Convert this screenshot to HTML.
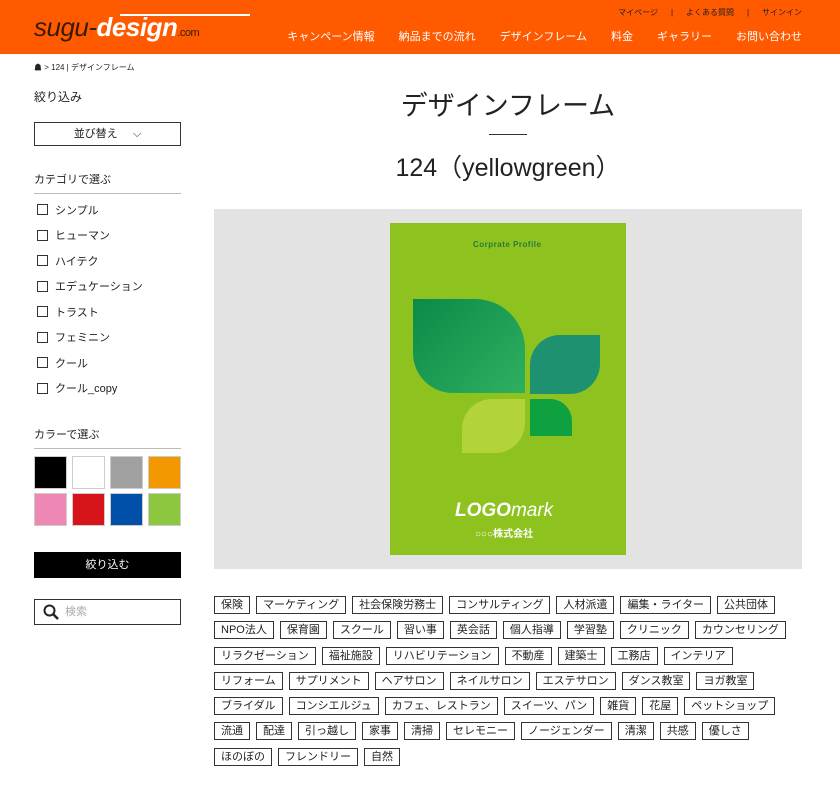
<!DOCTYPE html>
<html><head><meta charset="utf-8"><style>
*{box-sizing:border-box;margin:0;padding:0}
body{width:840px;height:787px;background:#fff;font-family:"Liberation Sans","Noto Sans CJK JP",sans-serif;color:#222;position:relative;overflow:hidden}
.hd{position:absolute;left:0;top:0;width:840px;height:54px;background:#ff5a00}
.logo{position:absolute;left:34px;top:12px;font-size:26px;color:#3a1a00;font-style:italic;letter-spacing:-0.5px}
.logo b{color:#fff}
.logo small{font-size:11px;color:#3a1a00;font-style:normal}
.logo .ln{position:absolute;left:86px;top:2px;width:130px;height:2px;background:#fff}
.top{position:absolute;right:38px;top:7px;font-size:8px;color:#222}
.top i{display:inline-block;width:28px;text-align:center;font-style:normal}
.nav{position:absolute;right:38px;top:28px;font-size:11px;color:#fff;display:flex;gap:24px}
.bc{position:absolute;left:34px;top:62px;font-size:8px}
.side{position:absolute;left:34px;width:147px}
.h{font-size:12px}
.sel{border:1px solid #333;height:24px;font-size:11px;text-align:center;line-height:22px}
.ttl{font-size:11px;border-bottom:1px solid #bbb;padding-bottom:6px}
.cb{font-size:11px;height:25.5px;display:flex;align-items:center}
.cb i{width:11px;height:11px;border:1px solid #333;margin-right:7px;margin-left:3px}
.sw{display:grid;grid-template-columns:repeat(4,33px);gap:4px 5px}
.sw div{height:33px;border:1px solid #ccc}
.btn{background:#000;color:#fff;height:26px;font-size:11px;text-align:center;line-height:26px}
.srch{border:1px solid #333;height:26px;font-size:11px;color:#aaa;line-height:24px;padding-left:30px;position:relative}
.main{position:absolute;left:214px;width:588px;text-align:center}
.tags{position:absolute;left:214px;top:596px;width:620px}
.row{display:flex;gap:6px;height:25.3px}
.tags span{border:1px solid #333;font-size:11px;height:18px;line-height:16px;padding:0 6px;white-space:nowrap}
.lf{position:absolute}
</style></head><body>
<div class="hd">
<div class="logo"><span class="ln"></span>sugu-<b>design</b><small>.com</small></div>
<div class="top">マイページ<i>|</i>よくある質問<i>|</i>サインイン</div>
<div class="nav"><span>キャンペーン情報</span><span>納品までの流れ</span><span>デザインフレーム</span><span>料金</span><span>ギャラリー</span><span>お問い合わせ</span></div>
</div>
<div class="bc">&#9751; &gt; 124 | デザインフレーム</div>
<div class="side" style="top:88px"><div class="h">絞り込み</div></div>
<div class="side sel" style="top:122px">並び替え &nbsp; &nbsp; ⌵</div>
<div class="side ttl" style="top:171px">カテゴリで選ぶ</div>
<div class="side" style="top:197px">
<div class="cb"><i></i>シンプル</div><div class="cb"><i></i>ヒューマン</div><div class="cb"><i></i>ハイテク</div><div class="cb"><i></i>エデュケーション</div><div class="cb"><i></i>トラスト</div><div class="cb"><i></i>フェミニン</div><div class="cb"><i></i>クール</div><div class="cb"><i></i>クール_copy</div></div>
<div class="side ttl" style="top:426px">カラーで選ぶ</div>
<div class="side sw" style="top:456px"><div style="background:#000"></div><div style="background:#fff"></div><div style="background:#a0a0a0"></div><div style="background:#f39800"></div><div style="background:#ee87b4"></div><div style="background:#d7141a"></div><div style="background:#0050aa"></div><div style="background:#8dc63f"></div></div>
<div class="side btn" style="top:552px">絞り込む</div>
<div class="side srch" style="top:599px"><svg style="position:absolute;left:8px;top:4px" width="16" height="16" viewBox="0 0 16 16"><circle cx="6.5" cy="6.5" r="5" fill="none" stroke="#222" stroke-width="2"/><path d="M10 10l5 5" stroke="#222" stroke-width="2.5"/></svg>検索</div>
<div class="main" style="top:84px;font-size:27px">デザインフレーム</div>
<div style="position:absolute;left:489px;top:134px;width:38px;height:1px;background:#333"></div>
<div class="main" style="top:148px;font-size:25px">124（yellowgreen）</div>
<div style="position:absolute;left:214px;top:209px;width:588px;height:360px;background:#e3e3e3"></div>
<div style="position:absolute;left:390px;top:223px;width:236px;height:332px;background:#8dc21f"></div>
<div class="lf" style="left:473px;top:240px;font-size:8px;font-weight:bold;color:#2a7a3a;letter-spacing:.5px">Corprate Profile</div>
<div class="lf" style="left:413px;top:299px;width:112px;height:94px;background:linear-gradient(135deg,#0b8a48,#2fb060);border-radius:0 50px 0 40px"></div>
<div class="lf" style="left:530px;top:335px;width:70px;height:59px;background:#1e9270;border-radius:30px 0 30px 0"></div>
<div class="lf" style="left:462px;top:399px;width:63px;height:54px;background:#b3d33a;border-radius:30px 0 30px 0"></div>
<div class="lf" style="left:530px;top:399px;width:42px;height:37px;background:#0fa040;border-radius:0 22px 0 0"></div>
<div class="lf" style="left:455px;top:500px;font-size:19px;color:#fff;font-style:italic"><b>LOGO</b><span style="font-weight:300">mark</span></div>
<div class="lf" style="left:475px;top:525px;font-size:10px;color:#fff;font-weight:bold">○○○株式会社</div>
<div class="tags">
<div class="row"><span>保険</span><span>マーケティング</span><span>社会保険労務士</span><span>コンサルティング</span><span>人材派遣</span><span>編集・ライター</span><span>公共団体</span></div>
<div class="row"><span>NPO法人</span><span>保育園</span><span>スクール</span><span>習い事</span><span>英会話</span><span>個人指導</span><span>学習塾</span><span>クリニック</span><span>カウンセリング</span></div>
<div class="row"><span>リラクゼーション</span><span>福祉施設</span><span>リハビリテーション</span><span>不動産</span><span>建築士</span><span>工務店</span><span>インテリア</span></div>
<div class="row"><span>リフォーム</span><span>サプリメント</span><span>ヘアサロン</span><span>ネイルサロン</span><span>エステサロン</span><span>ダンス教室</span><span>ヨガ教室</span></div>
<div class="row"><span>ブライダル</span><span>コンシエルジュ</span><span>カフェ、レストラン</span><span>スイーツ、パン</span><span>雑貨</span><span>花屋</span><span>ペットショップ</span></div>
<div class="row"><span>流通</span><span>配達</span><span>引っ越し</span><span>家事</span><span>清掃</span><span>セレモニー</span><span>ノージェンダー</span><span>清潔</span><span>共感</span><span>優しさ</span></div>
<div class="row"><span>ほのぼの</span><span>フレンドリー</span><span>自然</span></div>
</div>
</body></html>
